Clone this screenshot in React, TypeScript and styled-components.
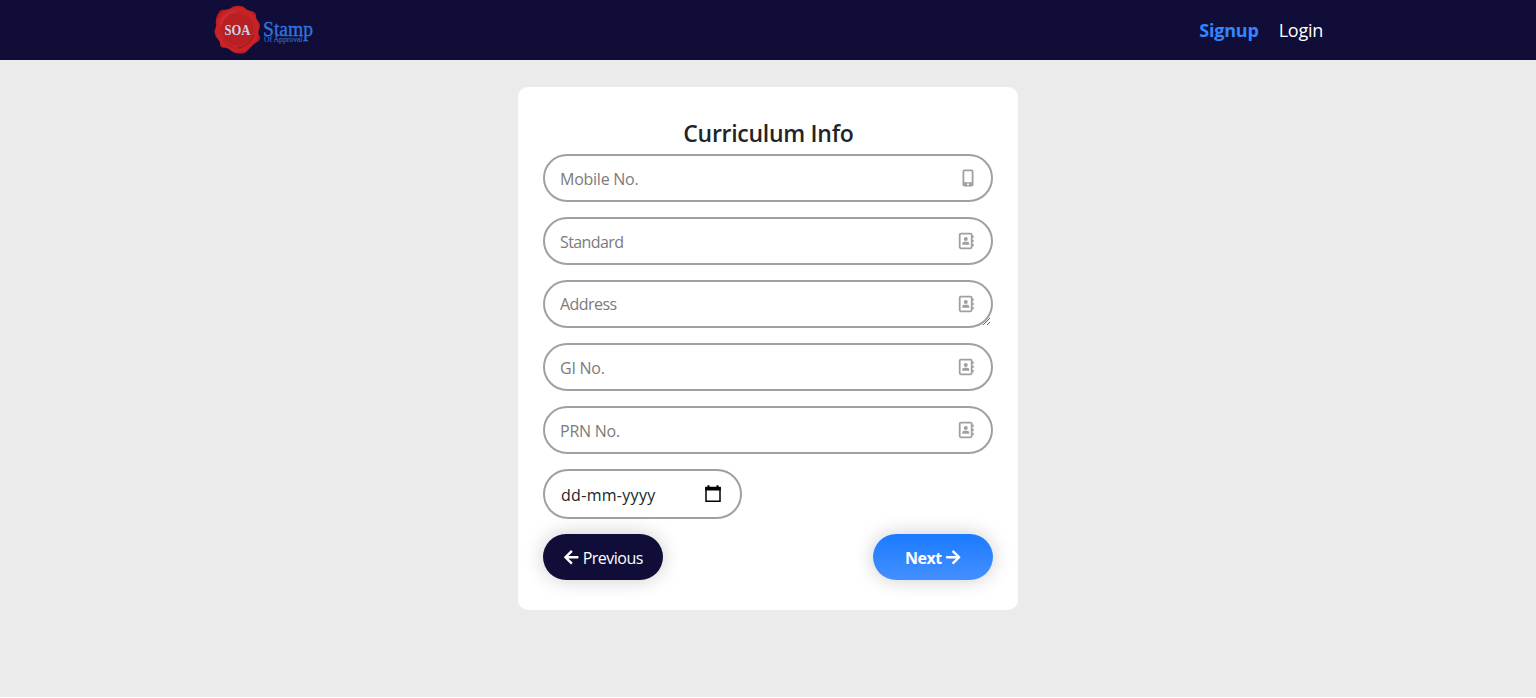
import React from "react";
import styled, { createGlobalStyle } from "styled-components";
import { FaArrowLeft, FaArrowRight } from "react-icons/fa";

const GlobalStyle = createGlobalStyle`
  * { box-sizing: border-box; }
  body {
    margin: 0;
    background: #fff;
    font-family: "Segoe UI", "Open Sans", "Noto Sans", sans-serif;
    color: #212529;
    overflow: hidden;
  }
`;

const Page = styled.div`
  height: 697px;
  background: #ebebeb;
`;

const Navbar = styled.header`
  height: 60px;
  padding: 0 213px;
  background: #100e38;
  display: flex;
  align-items: center;
  justify-content: space-between;
`;

const LogoSvg = styled.svg`
  display: block;
  width: 102px;
  height: 60px;
`;

const NavLinks = styled.nav`
  display: flex;
  gap: 20px;
`;

const NavLink = styled.a<{ $active?: boolean }>`
  font-size: 18px;
  line-height: 27px;
  font-weight: ${(p) => (p.$active ? 700 : 400)};
  letter-spacing: ${(p) => (p.$active ? "-0.2px" : "-0.25px")};
  color: ${(p) => (p.$active ? "#3287ff" : "#fff")};
`;

const Card = styled.form`
  width: 500px;
  height: 523px;
  margin: 27px 0 0 518.4px;
  padding: 31px 25px 0;
  background: #fff;
  border-radius: 10px;
`;

const Title = styled.h1`
  margin: 0 0 6px;
  font-size: 23px;
  line-height: 30px;
  font-weight: 600;
  letter-spacing: -0.28px;
  text-align: center;
`;

const Fields = styled.div`
  display: flex;
  flex-direction: column;
  gap: 15.2px;
  margin-left: -0.4px;
`;

const Field = styled.div<{ $width?: number; $height?: number }>`
  position: relative;
  width: ${(p) => p.$width ?? 450}px;
  height: ${(p) => p.$height ?? 48}px;
`;

const Input = styled.input<{ $tracking?: number }>`
  display: block;
  width: 100%;
  height: 100%;
  padding: 2px 15px 0;
  border: 2px solid #a0a0a0;
  border-radius: 25px;
  outline: none;
  background: #fff;
  font-family: inherit;
  font-size: 16px;
  letter-spacing: ${(p) => p.$tracking ?? -0.25}px;
  color: #212529;
  &::placeholder { color: #7b7b7b; opacity: 1; }
`;

const TextArea = styled(Input).attrs({ as: "textarea" })`
  padding-top: 11px;
  line-height: 22px;
  overflow: hidden;
  resize: vertical;
`;

const DateInput = styled(Input)`
  padding-left: 16px;
  &::placeholder { color: #212529; }
`;

const FieldIcon = styled.span<{ $right?: number }>`
  position: absolute;
  top: 0;
  bottom: 0;
  right: ${(p) => p.$right ?? 19}px;
  display: flex;
  align-items: center;
  color: #a0a0a0;
  pointer-events: none;
`;

const Actions = styled.div`
  margin: 15.4px 0 0 -0.4px;
  width: 450px;
  display: flex;
  justify-content: space-between;
`;

const Button = styled.button<{ $primary?: boolean }>`
  width: 120px;
  height: 45.6px;
  padding: 2.4px 0 0;
  border: 0;
  border-radius: 23px;
  display: flex;
  align-items: center;
  justify-content: center;
  gap: 3px;
  font-family: inherit;
  font-size: 16px;
  font-weight: ${(p) => (p.$primary ? 700 : 400)};
  letter-spacing: -0.5px;
  color: #fff;
  background: ${(p) => (p.$primary ? "linear-gradient(#1a7bff, #458fff)" : "#100e38")};
  box-shadow: 0 0 20px rgba(0, 0, 0, 0.2);
  svg { width: 16.5px; height: 16.5px; margin-top: -1px; }
`;

const Logo = () => (
  <LogoSvg viewBox="213 0 102 60">
    <defs>
      <radialGradient id="wax" cx="0.5" cy="0.5" r="0.55">
        <stop offset="0.65" stopColor="#bd2024" />
        <stop offset="0.8" stopColor="#cf2228" />
        <stop offset="1" stopColor="#a8141b" />
      </radialGradient>
    </defs>
    <path
      fill="url(#wax)"
      d="M219 12 C222 8 227 11 231 8 C235 5 243 5 246 9 C250 12 255 10 256 15 C255 20 260 21 260 26 C259 30 257 32 260 37 C261 42 255 42 252 46 C248 49 247 54 241 53.500 C235 54 232 52 229 49 C226 47 221 49 220 45 C221 40 215 38 215 34 C213 30 217 28 216 24 C215 20 217 15 219 12 Z"
    />
    <circle cx="237.500" cy="29.500" r="16.500" fill="#b92023" stroke="#c4282b" strokeWidth="1" />
    <path d="M220.500 25 Q223 13 236 11" fill="none" stroke="#df4546" strokeWidth="1.200" opacity=".6" />
    <path d="M254 35 Q249 46 238 48" fill="none" stroke="#981118" strokeWidth="1.300" opacity=".6" />
    <g fontFamily="'Liberation Serif', serif">
      <text x="224.500" y="35" fontSize="14" fontWeight="700" textLength="26" lengthAdjust="spacingAndGlyphs" fill="#c5d4f0">SOA</text>
      <text x="263" y="35.500" fontSize="20" textLength="50" lengthAdjust="spacingAndGlyphs" fill="#3174de" stroke="#3174de" strokeWidth=".35">Stamp</text>
      <text x="264" y="41.800" fontSize="7.500" textLength="38.500" lengthAdjust="spacingAndGlyphs" fill="#2b69cf" stroke="#2b69cf" strokeWidth=".15">Of Approval</text>
    </g>
  </LogoSvg>
);

const MobileIcon = () => (
  <svg width="12" height="18" viewBox="0 0 12 18">
    <path
      fill="currentColor"
      fillRule="evenodd"
      d="M2.500 .5h7a2 2 0 0 1 2 2v13a2 2 0 0 1-2 2h-7a2 2 0 0 1-2-2v-13a2 2 0 0 1 2-2z M2.300 2.300v11h7.400v-11z M5 14.400v1.500h2v-1.500z"
    />
  </svg>
);

const AddressBookIcon = () => (
  <svg width="17" height="18" viewBox="0 0 17 18">
    <rect x="1.700" y="1.600" width="12" height="14.700" rx="1.200" fill="none" stroke="currentColor" strokeWidth="1.800" />
    <path d="M14 3.500h1.700v2.200H14z M14 7.800h1.700V10H14z M14 12.100h1.700v2.200H14z" fill="currentColor" />
    <circle cx="7.750" cy="6.900" r="2" fill="currentColor" />
    <path d="M4.200 12.700v-.9a2.100 2.100 0 0 1 2.100-2.100h2.900a2.100 2.100 0 0 1 2.100 2.100v.9z" fill="currentColor" />
  </svg>
);

const CalendarIcon = () => (
  <svg width="16" height="18" viewBox="0 0 16 18">
    <path d="M1 3h14v13.200H1z" fill="none" stroke="#000" strokeWidth="1.500" />
    <path d="M.2 1.800h15.600V5.500H.2z M2.500 .3h2V3h-2z M11.500 .3h2V3h-2z" fill="#000" />
  </svg>
);

const App = () => (
  <>
    <GlobalStyle />
    <Page>
      <Navbar>
        <Logo />
        <NavLinks>
          <NavLink $active>Signup</NavLink>
          <NavLink>Login</NavLink>
        </NavLinks>
      </Navbar>
      <Card>
        <Title>Curriculum Info</Title>
        <Fields>
          <Field>
            <Input placeholder="Mobile No." />
            <FieldIcon><MobileIcon /></FieldIcon>
          </Field>
          <Field>
            <Input placeholder="Standard" $tracking={-0.6} />
            <FieldIcon $right={18.4}><AddressBookIcon /></FieldIcon>
          </Field>
          <Field $height={47.4}>
            <TextArea placeholder="Address" $tracking={-0.55} />
            <FieldIcon $right={18.4}><AddressBookIcon /></FieldIcon>
          </Field>
          <Field>
            <Input placeholder="GI No." />
            <FieldIcon $right={18.4}><AddressBookIcon /></FieldIcon>
          </Field>
          <Field>
            <Input placeholder="PRN No." />
            <FieldIcon $right={18.4}><AddressBookIcon /></FieldIcon>
          </Field>
          <Field $width={199.2} $height={49.4}>
            <DateInput placeholder="dd-mm-yyyy" $tracking={0.3} />
            <FieldIcon $right={21.2}><CalendarIcon /></FieldIcon>
          </Field>
        </Fields>
        <Actions>
          <Button type="button"><FaArrowLeft />Previous</Button>
          <Button type="button" $primary>Next <FaArrowRight /></Button>
        </Actions>
      </Card>
    </Page>
  </>
);

export default App;
